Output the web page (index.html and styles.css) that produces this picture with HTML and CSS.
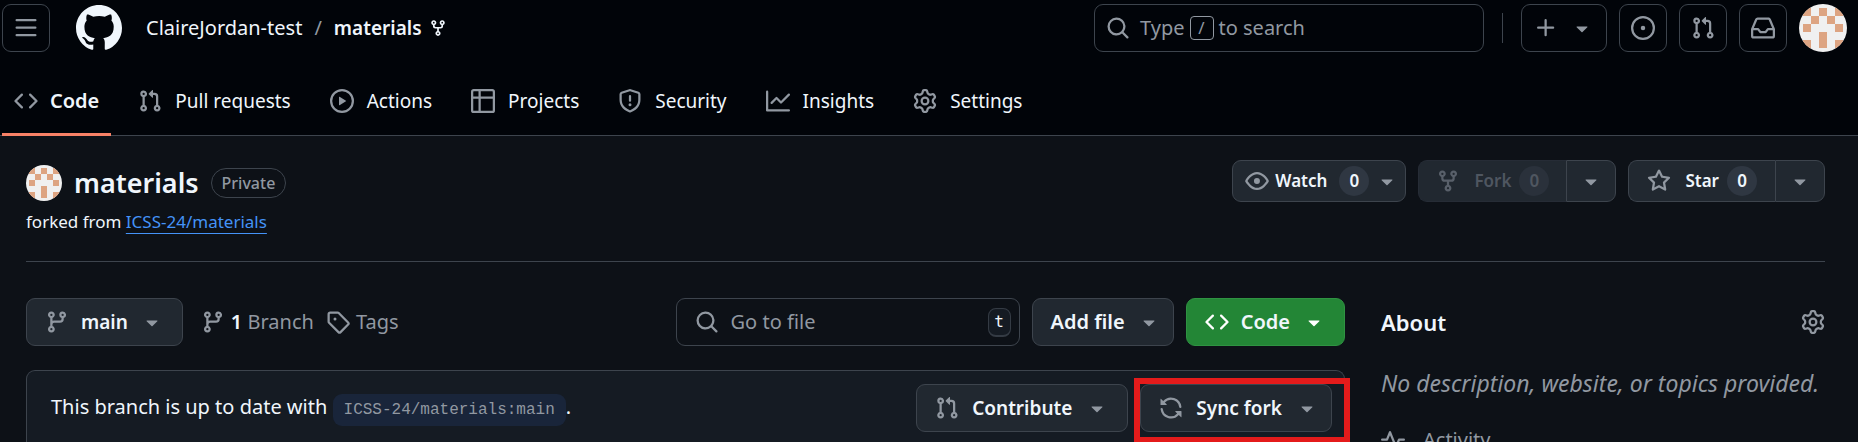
FILE: index.html
```html
<!DOCTYPE html>
<html lang="en">
<head>
<meta charset="utf-8">
<title>ClaireJordan-test/materials</title>
<link rel="stylesheet" href="styles.css">
</head>
<body>
<svg class="sprite" aria-hidden="true">
  <symbol id="bars" viewBox="0 0 16 16"><path d="M1 2.75A.75.75 0 0 1 1.75 2h12.5a.75.75 0 0 1 0 1.5H1.75A.75.75 0 0 1 1 2.75Zm0 5A.75.75 0 0 1 1.75 7h12.5a.75.75 0 0 1 0 1.5H1.75A.75.75 0 0 1 1 7.75ZM1.75 12h12.5a.75.75 0 0 1 0 1.5H1.75a.75.75 0 0 1 0-1.5Z"/></symbol>
  <symbol id="mark" viewBox="0 0 16 16"><path d="M8 0c4.42 0 8 3.58 8 8a8.013 8.013 0 0 1-5.45 7.59c-.4.08-.55-.17-.55-.38 0-.27.01-1.13.01-2.2 0-.75-.25-1.23-.54-1.48 1.78-.2 3.65-.88 3.65-3.95 0-.88-.31-1.59-.82-2.15.08-.2.36-1.02-.08-2.12 0 0-.67-.22-2.2.82-.64-.18-1.32-.27-2-.27-.68 0-1.36.09-2 .27-1.53-1.03-2.2-.82-2.2-.82-.44 1.1-.16 1.92-.08 2.12-.51.56-.82 1.28-.82 2.15 0 3.06 1.86 3.75 3.64 3.95-.23.2-.44.55-.51 1.07-.46.21-1.61.55-2.33-.66-.15-.24-.6-.83-1.23-.82-.67.01-.27.38.01.53.34.19.73.9.82 1.13.16.45.68 1.31 2.69.94 0 .67.01 1.3.01 1.49 0 .21-.15.45-.55.38A7.995 7.995 0 0 1 0 8c0-4.42 3.58-8 8-8Z"/></symbol>
  <symbol id="fork" viewBox="0 0 16 16"><path d="M5 5.372v.878c0 .414.336.75.75.75h4.5a.75.75 0 0 0 .75-.75v-.878a2.25 2.25 0 1 1 1.5 0v.878a2.25 2.25 0 0 1-2.25 2.25h-1.5v2.128a2.251 2.251 0 1 1-1.5 0V8.5h-1.5A2.25 2.25 0 0 1 3.500 6.250v-.878a2.25 2.25 0 1 1 1.500 0ZM5 3.250a.75.75 0 1 0-1.500 0 .75.75 0 0 0 1.500 0Zm6.750.75a.75.75 0 1 0 0-1.500.75.75 0 0 0 0 1.500Zm-3 8.750a.75.75 0 1 0-1.500 0 .75.75 0 0 0 1.500 0Z"/></symbol>
  <symbol id="search" viewBox="0 0 16 16"><path d="M10.680 11.740a6 6 0 0 1-7.922-8.982 6 6 0 0 1 8.982 7.922l3.040 3.040a.749.749 0 0 1-.326 1.275.749.749 0 0 1-.734-.215ZM11.500 7a4.499 4.499 0 1 0-8.997 0A4.499 4.499 0 0 0 11.500 7Z"/></symbol>
  <symbol id="plus" viewBox="0 0 16 16"><path d="M7.750 2a.75.75 0 0 1 .75.75V7h4.250a.75.75 0 0 1 0 1.500H8.500v4.250a.75.75 0 0 1-1.500 0V8.500H2.750a.75.75 0 0 1 0-1.500H7V2.750A.75.75 0 0 1 7.750 2Z"/></symbol>
  <symbol id="caret" viewBox="0 0 16 16"><path d="m4.427 7.427 3.396 3.396a.25.25 0 0 0 .354 0l3.396-3.396A.25.25 0 0 0 11.396 7H4.604a.25.25 0 0 0-.177.427Z"/></symbol>
  <symbol id="issue" viewBox="0 0 16 16"><path d="M8 9.500a1.500 1.500 0 1 0 0-3 1.500 1.500 0 0 0 0 3Z"/><path d="M8 0a8 8 0 1 1 0 16A8 8 0 0 1 8 0ZM1.500 8a6.500 6.500 0 1 0 13 0 6.500 6.500 0 0 0-13 0Z"/></symbol>
  <symbol id="pr" viewBox="0 0 16 16"><path d="M1.500 3.250a2.250 2.250 0 1 1 3 2.122v5.256a2.251 2.251 0 1 1-1.500 0V5.372A2.250 2.250 0 0 1 1.500 3.250Zm5.677-.177L9.573.677A.25.25 0 0 1 10 .854V2.500h1A2.500 2.500 0 0 1 13.500 5v5.628a2.251 2.251 0 1 1-1.500 0V5a1 1 0 0 0-1-1h-1v1.646a.25.25 0 0 1-.427.177L7.177 3.427a.25.25 0 0 1 0-.354ZM3.750 2.500a.75.75 0 1 0 0 1.500.75.75 0 0 0 0-1.500Zm0 9.500a.75.75 0 1 0 0 1.500.75.75 0 0 0 0-1.500Zm8.250.75a.75.75 0 1 0 1.500 0 .75.75 0 0 0-1.500 0Z"/></symbol>
  <symbol id="inbox" viewBox="0 0 16 16"><path d="M2.800 2.060A1.750 1.750 0 0 1 4.410 1h7.180c.7 0 1.333.417 1.610 1.060l2.740 6.395c.04.093.06.194.06.295v4.500A1.750 1.750 0 0 1 14.250 15H1.750A1.750 1.750 0 0 1 0 13.250v-4.500c0-.101.020-.202.060-.295Zm1.610.44a.25.25 0 0 0-.230.152L1.887 8H4.750a.75.75 0 0 1 .6.300L6.625 10h2.750l1.275-1.700a.75.75 0 0 1 .6-.300h2.863L11.820 2.652a.25.25 0 0 0-.230-.152Zm10.090 7h-2.875l-1.275 1.700a.75.75 0 0 1-.6.300h-3.500a.75.75 0 0 1-.6-.300L4.375 9.500H1.500v3.750c0 .138.112.25.25.25h12.500a.25.25 0 0 0 .25-.25Z"/></symbol>
  <symbol id="code" viewBox="0 0 16 16"><path d="m11.280 3.220 4.250 4.250a.75.75 0 0 1 0 1.060l-4.250 4.250a.749.749 0 0 1-1.275-.326.749.749 0 0 1 .215-.734L13.940 8l-3.720-3.720a.749.749 0 0 1 .326-1.275.749.749 0 0 1 .734.215Zm-6.560 0a.751.751 0 0 1 1.042.018.751.751 0 0 1 .018 1.042L2.060 8l3.720 3.720a.749.749 0 0 1-.326 1.275.749.749 0 0 1-.734-.215L.47 8.530a.75.75 0 0 1 0-1.060Z"/></symbol>
  <symbol id="play" viewBox="0 0 16 16"><path d="M8 0a8 8 0 1 1 0 16A8 8 0 0 1 8 0ZM1.500 8a6.500 6.500 0 1 0 13 0 6.500 6.500 0 0 0-13 0Zm4.879-2.773 4.264 2.559a.25.25 0 0 1 0 .428l-4.264 2.559A.25.25 0 0 1 6 10.559V5.442a.25.25 0 0 1 .379-.215Z"/></symbol>
  <symbol id="table" viewBox="0 0 16 16"><path d="M0 1.750C0 .784.784 0 1.750 0h12.500C15.216 0 16 .784 16 1.750v12.500A1.750 1.750 0 0 1 14.250 16H1.750A1.750 1.750 0 0 1 0 14.250ZM6.500 6.500v8h7.750a.25.25 0 0 0 .25-.25V6.500Zm8-1.500V1.750a.25.25 0 0 0-.25-.25H6.500V5Zm-13 1.500v7.750c0 .138.112.25.25.25H5v-8ZM5 5V1.500H1.750a.25.25 0 0 0-.25.25V5Z"/></symbol>
  <symbol id="shield" viewBox="0 0 16 16"><path d="M7.467.133a1.748 1.748 0 0 1 1.066 0l5.250 1.680A1.750 1.750 0 0 1 15 3.480V7c0 1.566-.320 3.182-1.303 4.682-.983 1.498-2.585 2.813-5.032 3.855a1.697 1.697 0 0 1-1.330 0c-2.447-1.042-4.049-2.357-5.032-3.855C1.320 10.182 1 8.566 1 7V3.480a1.755 1.755 0 0 1 1.217-1.667Zm.610 1.429a.25.25 0 0 0-.153 0l-5.250 1.680a.25.25 0 0 0-.174.238V7c0 1.358.275 2.666 1.057 3.860.784 1.194 2.121 2.340 4.366 3.297a.196.196 0 0 0 .154 0c2.245-.956 3.582-2.104 4.366-3.298C13.225 9.666 13.500 8.360 13.500 7V3.480a.251.251 0 0 0-.174-.237l-5.250-1.680ZM8.750 4.750v3a.75.75 0 0 1-1.500 0v-3a.75.75 0 0 1 1.500 0ZM9 10.500a1 1 0 1 1-2 0 1 1 0 0 1 2 0Z"/></symbol>
  <symbol id="graph" viewBox="0 0 16 16"><path d="M1.500 1.750V13.500h13.750a.75.75 0 0 1 0 1.500H.75a.75.75 0 0 1-.75-.75V1.750a.75.75 0 0 1 1.500 0Zm14.280 2.530-5.250 5.250a.75.75 0 0 1-1.060 0L7 7.060 4.280 9.780a.751.751 0 0 1-1.042-.018.751.751 0 0 1-.018-1.042l3.250-3.250a.75.75 0 0 1 1.060 0L10 7.940l4.720-4.720a.751.751 0 0 1 1.042.018.751.751 0 0 1 .018 1.042Z"/></symbol>
  <symbol id="gear" viewBox="0 0 16 16"><path d="M8 0a8.200 8.200 0 0 1 .701.031C9.444.095 9.990.645 10.160 1.290l.288 1.107c.018.066.079.158.212.224.231.114.454.243.668.386.123.082.233.090.299.071l1.103-.303c.644-.176 1.392.021 1.820.630.270.385.506.792.704 1.218.315.675.111 1.422-.364 1.891l-.814.806c-.049.048-.098.147-.088.294.016.257.016.515 0 .772-.010.147.038.246.088.294l.814.806c.475.469.679 1.216.364 1.891a7.977 7.977 0 0 1-.704 1.217c-.428.610-1.176.807-1.820.630l-1.102-.302c-.067-.019-.177-.011-.300.071a5.909 5.909 0 0 1-.668.386c-.133.066-.194.158-.211.224l-.290 1.106c-.168.646-.715 1.196-1.458 1.260a8.006 8.006 0 0 1-1.402 0c-.743-.064-1.289-.614-1.458-1.260l-.289-1.106c-.018-.066-.079-.158-.212-.224a5.738 5.738 0 0 1-.668-.386c-.123-.082-.233-.090-.299-.071l-1.103.303c-.644.176-1.392-.021-1.820-.630a8.120 8.120 0 0 1-.704-1.218c-.315-.675-.111-1.422.363-1.891l.815-.806c.050-.048.098-.147.088-.294a6.214 6.214 0 0 1 0-.772c.010-.147-.038-.246-.088-.294l-.815-.806C.635 6.045.431 5.298.746 4.623a7.920 7.920 0 0 1 .704-1.217c.428-.610 1.176-.807 1.820-.630l1.102.302c.067.019.177.011.300-.071.214-.143.437-.272.668-.386.133-.066.194-.158.211-.224l.290-1.106C6.009.645 6.556.095 7.299.030 7.530.010 7.764 0 8 0Zm-.571 1.525c-.036.003-.108.036-.137.146l-.289 1.105c-.147.561-.549.967-.998 1.189-.173.086-.340.183-.500.290-.417.278-.970.423-1.529.270l-1.103-.303c-.109-.030-.175.016-.195.045-.220.312-.412.644-.573.990-.014.031-.021.110.059.190l.815.806c.411.406.562.957.530 1.456a4.709 4.709 0 0 0 0 .582c.032.499-.119 1.050-.530 1.456l-.815.806c-.081.080-.073.159-.059.190.162.346.353.677.573.989.020.030.085.076.195.046l1.102-.303c.560-.153 1.113-.008 1.530.270.161.107.328.204.501.290.447.222.850.629.997 1.189l.289 1.105c.029.109.101.143.137.146a6.600 6.600 0 0 0 1.142 0c.036-.003.108-.036.137-.146l.289-1.105c.147-.561.549-.967.998-1.189.173-.086.340-.183.500-.290.417-.278.970-.423 1.529-.270l1.103.303c.109.029.175-.016.195-.045.220-.313.411-.644.573-.990.014-.031.021-.110-.059-.190l-.815-.806c-.411-.406-.562-.957-.530-1.456a4.709 4.709 0 0 0 0-.582c-.032-.499.119-1.050.530-1.456l.815-.806c.081-.080.073-.159.059-.190a6.464 6.464 0 0 0-.573-.989c-.020-.030-.085-.076-.195-.046l-1.102.303c-.560.153-1.113.008-1.530-.270a4.440 4.440 0 0 0-.501-.290c-.447-.222-.850-.629-.997-1.189l-.289-1.105c-.029-.110-.101-.143-.137-.146a6.600 6.600 0 0 0-1.142 0ZM11 8a3 3 0 1 1-6 0 3 3 0 0 1 6 0ZM9.500 8a1.500 1.500 0 1 0-3.001.001A1.500 1.500 0 0 0 9.500 8Z"/></symbol>
  <symbol id="eye" viewBox="0 0 16 16"><path d="M8 2c1.981 0 3.671.992 4.933 2.078 1.270 1.091 2.187 2.345 2.637 3.023a1.620 1.620 0 0 1 0 1.798c-.450.678-1.367 1.932-2.637 3.023C11.670 13.008 9.981 14 8 14c-1.981 0-3.671-.992-4.933-2.078C1.797 10.830.880 9.576.430 8.898a1.620 1.620 0 0 1 0-1.798c.450-.677 1.367-1.931 2.637-3.022C4.330 2.992 6.019 2 8 2ZM1.679 7.932a.120.120 0 0 0 0 .136c.411.622 1.241 1.750 2.366 2.717C5.176 11.758 6.527 12.500 8 12.500c1.473 0 2.825-.742 3.955-1.715 1.124-.967 1.954-2.096 2.366-2.717a.120.120 0 0 0 0-.136c-.412-.621-1.242-1.750-2.366-2.717C10.824 4.242 9.473 3.500 8 3.500c-1.473 0-2.825.742-3.955 1.715-1.124.967-1.954 2.096-2.366 2.717ZM8 10a2 2 0 1 1-.001-3.999A2 2 0 0 1 8 10Z"/></symbol>
  <symbol id="star" viewBox="0 0 16 16"><path d="M8 .25a.75.75 0 0 1 .673.418l1.882 3.815 4.210.612a.75.75 0 0 1 .416 1.279l-3.046 2.970.719 4.192a.751.751 0 0 1-1.088.791L8 12.347l-3.766 1.980a.75.75 0 0 1-1.088-.790l.720-4.194L.818 6.374a.75.75 0 0 1 .416-1.280l4.210-.611L7.327.668A.75.75 0 0 1 8 .25Zm0 2.445L6.615 5.500a.75.75 0 0 1-.564.410l-3.097.450 2.240 2.184a.75.75 0 0 1 .216.664l-.528 3.084 2.769-1.456a.75.75 0 0 1 .698 0l2.770 1.456-.530-3.084a.75.75 0 0 1 .216-.664l2.240-2.183-3.096-.450a.75.75 0 0 1-.564-.410L8 2.694Z"/></symbol>
  <symbol id="branch" viewBox="0 0 16 16"><path d="M9.500 3.250a2.250 2.250 0 1 1 3 2.122V6A2.500 2.500 0 0 1 10 8.500H6a1 1 0 0 0-1 1v1.128a2.251 2.251 0 1 1-1.500 0V5.372a2.250 2.250 0 1 1 1.500 0v1.836A2.493 2.493 0 0 1 6 7h4a1 1 0 0 0 1-1v-.628A2.250 2.250 0 0 1 9.500 3.250Zm-6 0a.75.75 0 1 0 1.500 0 .75.75 0 0 0-1.500 0Zm8.250-.75a.75.75 0 1 0 0 1.500.75.75 0 0 0 0-1.500ZM4.250 12a.75.75 0 1 0 0 1.500.75.75 0 0 0 0-1.500Z"/></symbol>
  <symbol id="tag" viewBox="0 0 16 16"><path d="M1 7.775V2.750C1 1.784 1.784 1 2.750 1h5.025c.464 0 .910.184 1.238.513l6.250 6.250a1.750 1.750 0 0 1 0 2.474l-5.026 5.026a1.750 1.750 0 0 1-2.474 0l-6.250-6.250A1.752 1.752 0 0 1 1 7.775Zm1.500 0c0 .066.026.130.073.177l6.250 6.250a.25.25 0 0 0 .354 0l5.025-5.025a.25.25 0 0 0 0-.354l-6.250-6.250a.25.25 0 0 0-.177-.073H2.750a.25.25 0 0 0-.25.25ZM6 5a1 1 0 1 1 0 2 1 1 0 0 1 0-2Z"/></symbol>
  <symbol id="sync" viewBox="0 0 16 16"><path d="M1.705 8.005a.75.75 0 0 1 .834.656 5.500 5.500 0 0 0 9.592 2.970l-1.204-1.204a.25.25 0 0 1 .177-.427h3.646a.25.25 0 0 1 .25.25v3.646a.25.25 0 0 1-.427.177l-1.380-1.380A7.002 7.002 0 0 1 1.050 8.840a.75.75 0 0 1 .656-.834ZM8 2.500a5.487 5.487 0 0 0-4.131 1.869l1.204 1.204A.25.25 0 0 1 4.896 6H1.250A.25.25 0 0 1 1 5.750V2.104a.25.25 0 0 1 .427-.177l1.380 1.380A7.002 7.002 0 0 1 14.950 7.160a.75.75 0 0 1-1.490.178A5.500 5.500 0 0 0 8 2.500Z"/></symbol>
  <symbol id="pulse" viewBox="0 0 16 16"><path d="M6 2c.306 0 .582.187.696.471L10 10.731l1.304-3.260A.751.751 0 0 1 12 7h3.250a.75.75 0 0 1 0 1.500h-2.742l-1.812 4.528a.751.751 0 0 1-1.392 0L6 4.770 4.696 8.030A.75.75 0 0 1 4 8.500H.75a.75.75 0 0 1 0-1.500h2.742l1.812-4.529A.751.751 0 0 1 6 2Z"/></symbol>
  <symbol id="identicon" viewBox="0 0 12 12"><path class="identicon-bg" d="M0 0h12v12H0z"/><path class="identicon-fg" d="M1 1h2v2H1zM5 1h2v2H5zM9 1h2v2H9zM3 3h2v2H3zM7 3h2v2H7zM1 5h2v2H1zM9 5h2v2H9zM5 7h2v4H5zM1 9h2v2H1zM9 9h2v2H9z"/></symbol>
</svg>

<header class="site-header">
  <div class="topbar">
    <button class="square-btn" aria-label="Open menu"><svg class="icon"><use href="#bars"/></svg></button>
    <a class="home" href="#" aria-label="Homepage"><svg class="mark"><use href="#mark"/></svg></a>
    <nav class="crumbs" aria-label="Breadcrumb">
      <a href="#">ClaireJordan-test</a><span class="slash">/</span><a class="strong" href="#">materials</a>
      <svg class="icon icon-small"><use href="#fork"/></svg>
    </nav>
    <div class="top-tools">
      <button class="global-search"><svg class="icon"><use href="#search"/></svg><span>Type</span><kbd class="slash-key">/</kbd><span>to search</span></button>
      <span class="tool-divider"></span>
      <button class="square-btn create-btn" aria-label="Create new"><svg class="icon"><use href="#plus"/></svg><svg class="icon"><use href="#caret"/></svg></button>
      <button class="square-btn" aria-label="Issues"><svg class="icon"><use href="#issue"/></svg></button>
      <button class="square-btn" aria-label="Pull requests"><svg class="icon"><use href="#pr"/></svg></button>
      <button class="square-btn" aria-label="Notifications"><svg class="icon"><use href="#inbox"/></svg></button>
      <button class="avatar-btn" aria-label="Account"><svg class="avatar"><use href="#identicon"/></svg></button>
    </div>
  </div>
  <nav class="tabs" aria-label="Repository">
    <a class="tab tab-current" href="#" aria-current="page"><svg class="icon"><use href="#code"/></svg>Code</a>
    <a class="tab" href="#"><svg class="icon"><use href="#pr"/></svg>Pull requests</a>
    <a class="tab" href="#"><svg class="icon"><use href="#play"/></svg>Actions</a>
    <a class="tab" href="#"><svg class="icon"><use href="#table"/></svg>Projects</a>
    <a class="tab" href="#"><svg class="icon"><use href="#shield"/></svg>Security</a>
    <a class="tab" href="#"><svg class="icon"><use href="#graph"/></svg>Insights</a>
    <a class="tab" href="#"><svg class="icon"><use href="#gear"/></svg>Settings</a>
  </nav>
</header>

<main class="page">
  <section class="repo-head">
    <div class="repo-id">
      <div class="repo-title">
        <svg class="avatar avatar-small"><use href="#identicon"/></svg>
        <h1>materials</h1>
        <span class="pill">Private</span>
      </div>
      <p class="forked">forked from <a href="#">ICSS-24/materials</a></p>
    </div>
    <div class="repo-actions">
      <button class="btn social watch"><svg class="icon"><use href="#eye"/></svg>Watch<span class="count">0</span><svg class="icon caret"><use href="#caret"/></svg></button>
      <div class="split">
        <button class="btn social split-main fork" disabled><svg class="icon"><use href="#fork"/></svg>Fork<span class="count">0</span></button>
        <button class="btn social split-caret" aria-label="Fork options"><svg class="icon caret"><use href="#caret"/></svg></button>
      </div>
      <div class="split">
        <button class="btn social split-main"><svg class="icon"><use href="#star"/></svg>Star<span class="count">0</span></button>
        <button class="btn social split-caret" aria-label="Lists"><svg class="icon caret"><use href="#caret"/></svg></button>
      </div>
    </div>
  </section>

  <div class="columns">
    <section class="files">
      <div class="file-bar">
        <button class="btn"><svg class="icon"><use href="#branch"/></svg>main<svg class="icon caret"><use href="#caret"/></svg></button>
        <div class="refs">
          <a href="#"><svg class="icon"><use href="#branch"/></svg><span><strong>1</strong> Branch</span></a>
          <a href="#"><svg class="icon"><use href="#tag"/></svg>Tags</a>
        </div>
        <label class="file-search"><svg class="icon"><use href="#search"/></svg><input type="text" placeholder="Go to file" aria-label="Go to file"><kbd class="t-key">t</kbd></label>
        <button class="btn large-label tight-end">Add file<svg class="icon caret"><use href="#caret"/></svg></button>
        <button class="btn large-label primary"><svg class="icon"><use href="#code"/></svg>Code<svg class="icon caret"><use href="#caret"/></svg></button>
      </div>
      <div class="branch-status">
        <p>This branch is up to date with <code>ICSS-24/materials:main</code>.</p>
        <button class="btn"><svg class="icon"><use href="#pr"/></svg>Contribute<svg class="icon caret"><use href="#caret"/></svg></button>
        <div class="marked"><button class="btn tight-end"><svg class="icon"><use href="#sync"/></svg>Sync fork<svg class="icon caret"><use href="#caret"/></svg></button></div>
      </div>
    </section>
    <aside class="about">
      <div class="about-head"><h2>About</h2><button class="plain" aria-label="Edit details"><svg class="icon"><use href="#gear"/></svg></button></div>
      <p class="description">No description, website, or topics provided.</p>
      <a class="activity" href="#"><svg class="icon"><use href="#pulse"/></svg>Activity</a>
    </aside>
  </div>
</main>
</body>
</html>
```

FILE: styles.css
```css
* { box-sizing: border-box; }

body {
  margin: 0;
  height: 100vh;
  overflow: hidden;
  background: #0d1117;
  color: #f0f6fc;
  font-family: "Noto Sans", "Open Sans", sans-serif;
  font-size: 20px;
  line-height: 28px;
}

h1, h2, p { margin: 0; }
a { color: inherit; text-decoration: none; }
button, input { font: inherit; color: inherit; }

.sprite { position: absolute; width: 0; height: 0; }
.icon { width: 24px; height: 24px; flex: none; fill: #9198a1; }
.icon-small { width: 18px; height: 18px; fill: #f0f6fc; }
.identicon-bg { fill: #f0f0f0; }
.identicon-fg { fill: #dda482; }

.site-header {
  background: #010409;
  border-bottom: 1px solid #3d444d;
}

.topbar { display: flex; align-items: center; padding: 4px 11px 0 2px; }

.square-btn {
  display: flex;
  align-items: center;
  justify-content: center;
  width: 48px;
  height: 48px;
  padding: 0;
  background: none;
  border: 1px solid #3d444d;
  border-radius: 9px;
}
.create-btn { width: 86px; gap: 12px; }

.home { display: flex; margin-left: 26px; }
.mark { width: 46px; height: 46px; fill: #f0f6fc; }

.crumbs { display: flex; align-items: center; margin-left: 24px; }
.slash { margin: 0 12px; color: #9198a1; }
.strong { font-size: 19px; font-weight: 600; margin-right: 7px; }

.top-tools { display: flex; align-items: center; gap: 12px; margin-left: auto; }

.global-search {
  display: flex;
  align-items: center;
  width: 390px;
  height: 48px;
  padding: 0 11px;
  background: none;
  border: 1px solid #3d444d;
  border-radius: 9px;
  color: #9198a1;
}
.global-search .icon { margin-right: 10px; }
.slash-key {
  width: 24px;
  height: 24px;
  margin: 0 5px;
  border: 1px solid #9198a1;
  border-radius: 4px;
  font: inherit;
  font-size: 17px;
  line-height: 22px;
  text-align: center;
}
.tool-divider { width: 1px; height: 30px; margin: 0 6px; background: #3d444d; }

.avatar-btn { display: flex; padding: 0; background: none; border: 0; border-radius: 50%; }
.avatar { width: 48px; height: 48px; border-radius: 50%; }
.avatar-small { width: 36px; height: 36px; }

.tabs { display: flex; gap: 15px; margin-bottom: -1px; padding: 16px 2px 0; font-size: 19px; }
.tab {
  display: flex;
  align-items: center;
  gap: 13px;
  height: 68px;
  padding: 0 12px;
  border-bottom: 3px solid transparent;
}
.tab-current { gap: 12px; border-color: #f78166; font-size: 20px; font-weight: 600; }

.page { padding: 24px 33px 0 26px; }

.repo-head {
  display: flex;
  justify-content: space-between;
  align-items: flex-start;
  padding-bottom: 24px;
  border-bottom: 1px solid #3d444d;
}
.repo-title { display: flex; align-items: center; gap: 12px; height: 46px; }
.repo-title h1 { font-size: 27px; line-height: 36px; font-weight: 600; }
.pill {
  padding: 0 10px;
  border: 1px solid #3d444d;
  border-radius: 15px;
  color: #9198a1;
  font-size: 16px;
  font-weight: 500;
}
.forked { font-size: 17px; line-height: 31px; }
.forked a { color: #4493f8; text-decoration: underline; text-underline-offset: 5px; }

.btn {
  display: flex;
  align-items: center;
  gap: 12px;
  height: 48px;
  padding: 0 18px;
  background: #212830;
  border: 1px solid #3d444d;
  border-radius: 9px;
  font-size: 19px;
  font-weight: 600;
  white-space: nowrap;
}
.large-label { font-size: 20px; }
.tight-end { padding-right: 12px; }
.primary { background: #238636; border-color: #2f9342; }
.primary .icon { fill: #ffffff; }

.repo-actions { display: flex; gap: 12px; }
.social { height: 42px; gap: 6px; font-size: 17px; }
.watch { padding: 0 6px 0 12px; }
.watch .count { margin-left: 6px; }
.split { display: flex; }
.split-main { gap: 8px; border-radius: 9px 0 0 9px; border-right: 0; }
.split-main .icon { margin-right: 6px; }
.split-caret { width: 50px; padding: 0; justify-content: center; border-radius: 0 9px 9px 0; }
.count {
  min-width: 30px;
  border-radius: 15px;
  background: #2f3742;
  line-height: 30px;
  text-align: center;
}
.fork { padding: 0 17px; color: #4f5660; border-color: #262c36; }
.fork .icon { fill: #59606a; }
.fork .count { background: #2a313b; }

.columns { display: flex; gap: 36px; padding-top: 36px; }
.files { flex: 1; min-width: 0; }
.file-bar { display: flex; align-items: center; gap: 12px; }
.refs { display: flex; gap: 12px; margin: 0 auto 0 6px; color: #9198a1; }
.refs a { display: flex; align-items: center; gap: 6px; }
.refs strong { color: #f0f6fc; font-weight: 600; }
.file-search {
  display: flex;
  align-items: center;
  width: 344px;
  height: 48px;
  padding: 0 8px 0 18px;
  border: 1px solid #3d444d;
  border-radius: 9px;
}
.file-search input {
  flex: 1;
  min-width: 0;
  padding: 0 12px;
  background: none;
  border: 0;
  outline: 0;
}
.file-search input::placeholder { color: #9198a1; opacity: 1; }
.t-key {
  width: 23px;
  height: 29px;
  border: 1px solid #343b44;
  border-bottom-width: 2px;
  border-radius: 8px;
  background: #151b23;
  font-family: "DejaVu Sans Mono", monospace;
  font-size: 16px;
  line-height: 25px;
  text-align: center;
}

.branch-status {
  display: flex;
  align-items: center;
  gap: 12px;
  height: 75px;
  margin-top: 24px;
  padding: 0 12px 0 24px;
  background: #151b23;
  border: 1px solid #3d444d;
  border-bottom: 0;
  border-radius: 9px 9px 0 0;
}
.branch-status p { margin-right: auto; }
.branch-status .btn { gap: 13px; }
.branch-status code {
  padding: 7px 11px;
  border-radius: 9px;
  background: #19253a;
  color: #9198a1;
  font-family: "Liberation Mono", monospace;
  font-size: 16px;
}
.marked { position: relative; }
.marked::after {
  content: "";
  position: absolute;
  inset: -6px -18px -11px -6px;
  border: 6px solid #e41b1b;
  pointer-events: none;
}

.about { width: 444px; }
.about-head { display: flex; align-items: center; justify-content: space-between; height: 48px; }
.about h2 { font-size: 22px; font-weight: 600; }
.plain { display: flex; padding: 0; background: none; border: 0; }
.description { margin-top: 21px; color: #9198a1; font-size: 23px; line-height: 32px; font-style: italic; white-space: nowrap; }
.activity { display: flex; align-items: center; gap: 18px; margin-top: 27px; color: #9198a1; }
```
